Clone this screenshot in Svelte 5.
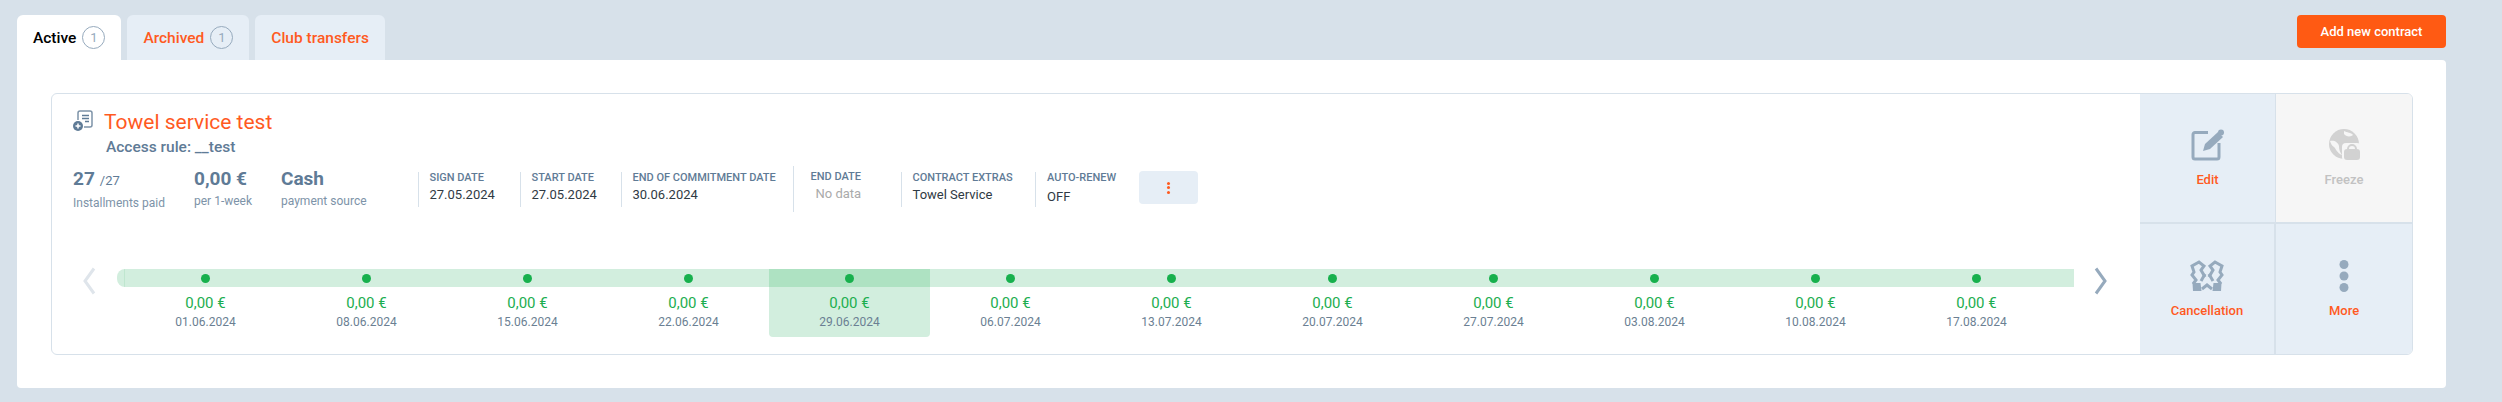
<script>
  const stats = [
    { value: '27', sub: '/27', label: 'Installments paid', width: 121 },
    { value: '0,00 €', label: 'per 1-week', width: 87 },
    { value: 'Cash', label: 'payment source', width: 136.500 }
  ];

  const fields = [
    { title: 'SIGN DATE', value: '27.05.2024', width: 102 },
    { title: 'START DATE', value: '27.05.2024', width: 101 },
    { title: 'END OF COMMITMENT DATE', value: '30.06.2024', width: 172 },
    { title: 'END DATE', value: 'No data', width: 108, empty: true },
    { title: 'CONTRACT EXTRAS', value: 'Towel Service', width: 134.500 },
    { title: 'AUTO-RENEW', value: 'OFF', width: 104, low: true }
  ];

  const dates = [
    '01.06.2024', '08.06.2024', '15.06.2024', '22.06.2024', '29.06.2024', '06.07.2024',
    '13.07.2024', '20.07.2024', '27.07.2024', '03.08.2024', '10.08.2024', '17.08.2024'
  ];
  const current = 4;
</script>

<div class="page">
  <div class="top">
    <div class="tabs">
      <div class="tab active">Active <span class="count">1</span></div>
      <div class="tab">Archived <span class="count">1</span></div>
      <div class="tab">Club transfers</div>
    </div>
    <button class="add">Add new contract</button>
  </div>

  <div class="panel">
    <div class="card">
      <div class="info">
        <div class="heading">
          <svg class="doc" width="20" height="21" viewBox="0 0 20 21">
            <path d="M5 10V3a2 2 0 0 1 2-2h10a2 2 0 0 1 2 2v12a2 2 0 0 1-2 2h-6" fill="none" stroke="#7d93a8" stroke-width="1.500"/>
            <path d="M9 5.500h7M9 8.500h7M12 11.500h4" stroke="#5f7b96" stroke-width="1.500"/>
            <circle cx="5" cy="16" r="5" fill="#5f7b96"/>
            <path d="M5 13.500v5M2.500 16h5" stroke="#fff" stroke-width="1.500"/>
          </svg>
          <h2>Towel service test</h2>
        </div>
        <p class="rule">Access rule: __test</p>

        <div class="details">
          {#each stats as s}
            <div class="stat" style="width: {s.width}px">
              <div class="value">{s.value}{#if s.sub}<small>{s.sub}</small>{/if}</div>
              <div class="label">{s.label}</div>
            </div>
          {/each}
          {#each fields as f}
            <div class="field" class:tall={f.empty} style="width: {f.width}px">
              <div class="title">{f.title}</div>
              <div class="text" class:empty={f.empty} class:low={f.low}>{f.value}</div>
            </div>
          {/each}
          <button class="menu" aria-label="Options"><i></i><i></i><i></i></button>
        </div>

        <div class="timeline">
          <svg class="arrow" width="14" height="28" viewBox="0 0 14 28">
            <path d="M12 1.500 3 14l9 12.500" fill="none" stroke="#dfe5eb" stroke-width="3"/>
          </svg>
          <div class="track">
            <div class="cap"></div>
            {#each dates as d, i}
              <div class="item" class:current={i === current}>
                <div class="band"><span class="dot"></span></div>
                <div class="amount">0,00 €</div>
                <div class="date">{d}</div>
              </div>
            {/each}
            <div class="tail"></div>
          </div>
          <svg class="arrow" width="14" height="28" viewBox="0 0 14 28">
            <path d="M2 1.500 11 14l-9 12.500" fill="none" stroke="#96aabd" stroke-width="3"/>
          </svg>
        </div>
      </div>

      <div class="actions">
        <button class="action">
          <svg width="34" height="32" viewBox="0 0 34 32">
            <path d="M17 3.500H4a2 2 0 0 0-2 2V28a2 2 0 0 0 2 2h22a2 2 0 0 0 2-2V14" fill="none" stroke="#96aabd" stroke-width="3"/>
            <path d="M12 22l2-7L27 3l5 5-13 12z" fill="#96aabd"/>
            <circle cx="30" cy="3.500" r="3" fill="#96aabd"/>
          </svg>
          <span>Edit</span>
        </button>
        <button class="action off">
          <svg width="34" height="32" viewBox="0 0 34 32">
            <circle cx="17" cy="15" r="15" fill="#d2d2d2"/>
            <path d="M17 2c3 2 7 1 9 4-2 2-7 2-9-1zM3 12c4-1 8 1 9 5 0 4 1 6 3 9-5-2-6-6-8-8-2-1-3-3-4-6z" fill="#f6f6f6"/>
            <rect x="15" y="14" width="19" height="18" rx="4" fill="#f6f6f6"/>
            <rect x="17" y="20" width="16" height="11" rx="3" fill="#d2d2d2"/>
            <path d="M21 21v-1a4 4 0 0 1 8 0v1" fill="none" stroke="#d2d2d2" stroke-width="2"/>
          </svg>
          <span>Freeze</span>
        </button>
        <button class="action">
          <svg width="36" height="32" viewBox="0 0 36 32">
            <g fill="none" stroke="#96aabd" stroke-width="3">
              <path d="M16 17 12 10l3-4-5-4-7 4 2 6-2 3 4 5-3 4"/>
              <path d="M16 14l-4 7"/>
              <path d="M20 17l4-7-3-4 5-4 7 4-2 6 2 3-4 5 3 4"/>
              <path d="M20 14l4 7"/>
              <path d="M13 29l5-4 5 4"/>
            </g>
            <path d="M3.500 23h8l1 8H4zM32.500 23h-8l-1 8H32z" fill="#96aabd"/>
          </svg>
          <span>Cancellation</span>
        </button>
        <button class="action">
          <svg width="34" height="32" viewBox="0 0 34 32">
            <circle cx="17" cy="4.500" r="4.500" fill="#96aabd"/>
            <circle cx="17" cy="16" r="4.500" fill="#96aabd"/>
            <circle cx="17" cy="27.500" r="4.500" fill="#96aabd"/>
          </svg>
          <span>More</span>
        </button>
      </div>
    </div>
  </div>
</div>

<style>
  :global(body) {
    margin: 0;
    background: #d7e1ea;
  }

  .page {
    height: 402px;
    box-sizing: border-box;
    padding: 15px 56px 0 17px;
    font-family: Roboto, "Liberation Sans", sans-serif;
    color: #5f7b96;
  }

  .top {
    display: flex;
    justify-content: space-between;
    height: 45px;
  }

  .tabs {
    display: flex;
    gap: 6px;
  }

  .tab {
    display: flex;
    align-items: center;
    gap: 6px;
    height: 45px;
    padding: 0 16px;
    box-sizing: border-box;
    background: #e6eef6;
    border-radius: 6px 6px 0 0;
    color: #ff5a1f;
    font-size: 15.500px;
    font-weight: 500;
  }

  .tab.active {
    background: #fff;
    color: #000;
  }

  .count {
    width: 21px;
    height: 21px;
    border: 1px solid #96aabd;
    border-radius: 50%;
    display: flex;
    align-items: center;
    justify-content: center;
    color: #96aabd;
    font-size: 13px;
    font-weight: 400;
  }

  .add {
    width: 149px;
    height: 33px;
    padding: 0;
    border: 0;
    border-radius: 4px;
    background: #ff5a13;
    color: #fff;
    font: 500 13px Roboto, sans-serif;
  }

  .panel {
    height: 328px;
    box-sizing: border-box;
    padding: 33px 33px 33px 34px;
    background: #fff;
    border-radius: 0 4px 4px 4px;
  }

  .card {
    display: flex;
    height: 262px;
    box-sizing: border-box;
    border: 1px solid #d7e1ea;
    border-radius: 6px;
    overflow: hidden;
  }

  .info {
    flex: 1;
    min-width: 0;
    padding: 16px 0 0 21px;
  }

  .heading {
    display: flex;
    align-items: center;
    gap: 11px;
    height: 24px;
  }

  .doc {
    flex: none;
    margin-top: -3px;
  }

  h2 {
    margin: 0;
    color: #ff5a1f;
    font-size: 21px;
    font-weight: 400;
    line-height: 24px;
  }

  .rule {
    margin: 3px 0 0 33px;
    font-size: 15.500px;
    font-weight: 500;
    line-height: 20px;
  }

  .details {
    display: flex;
    align-items: center;
    height: 46px;
    margin-top: 9px;
  }

  .stat {
    flex: none;
    align-self: flex-start;
    padding-top: 1px;
  }

  .value {
    font-size: 19px;
    font-weight: 700;
    line-height: 24px;
  }

  .value small {
    margin-left: 5px;
    font-size: 13px;
    font-weight: 400;
  }

  .label {
    margin-top: 2px;
    font-size: 12px;
    line-height: 16px;
    color: #7d93a8;
  }

  .field {
    flex: none;
    height: 35px;
    box-sizing: border-box;
    border-left: 1px solid #d7e1ea;
    padding-left: 11px;
  }

  .field.tall {
    height: 46px;
    padding: 5px 0 0 17px;
  }

  .title {
    font-size: 11px;
    font-weight: 500;
    line-height: 12px;
    white-space: nowrap;
  }

  .text {
    margin-top: 3px;
    color: #2f3a44;
    font-size: 13px;
    font-weight: 400;
    line-height: 16px;
    white-space: nowrap;
  }

  .text.empty {
    padding-left: 5px;
    color: #aaa;
  }

  .text.low {
    margin-top: 5px;
  }

  .menu {
    flex: none;
    align-self: flex-start;
    display: flex;
    flex-direction: column;
    align-items: center;
    justify-content: center;
    gap: 1.500px;
    width: 59px;
    height: 33px;
    margin-top: 5px;
    padding: 0;
    border: 0;
    border-radius: 4px;
    background: #e6eef6;
  }

  .menu i {
    width: 3px;
    height: 3px;
    border-radius: 50%;
    background: #ff5a1f;
  }

  .timeline {
    display: flex;
    align-items: flex-start;
    margin-top: 57px;
    margin-left: 9px;
  }

  .arrow {
    flex: none;
  }

  .arrow:first-child {
    margin: -2px 21px 0 0;
  }

  .arrow:last-child {
    margin: -2px 0 0 20px;
  }

  .track {
    display: flex;
    width: 1957px;
    flex: none;
  }

  .cap {
    flex: none;
    width: 8px;
    height: 18px;
    box-sizing: border-box;
    border-right: 1px solid #bfe6cf;
    border-radius: 9px 0 0 9px;
    background: #d2eede;
  }

  .tail {
    flex: 1;
    height: 18px;
    background: #d2eede;
  }

  .item {
    flex: none;
    width: 161px;
    height: 68px;
    text-align: center;
    border-radius: 0 0 4px 4px;
  }

  .item.current {
    background: #d2eede;
  }

  .band {
    display: flex;
    align-items: center;
    justify-content: center;
    height: 18px;
    background: #d2eede;
  }

  .current .band {
    background: #aee2c2;
  }

  .dot {
    width: 9px;
    height: 9px;
    border-radius: 50%;
    background: #17b04d;
  }

  .amount {
    margin-top: 6px;
    color: #1cae50;
    font-size: 15px;
    line-height: 20px;
  }

  .date {
    color: #6b7f93;
    font-size: 12px;
    line-height: 18px;
  }

  .actions {
    flex: none;
    display: grid;
    grid-template-columns: 136px 136px;
    grid-template-rows: 130px 130px;
    width: 272px;
  }

  .action {
    display: flex;
    flex-direction: column;
    align-items: center;
    justify-content: center;
    gap: 11px;
    padding: 0;
    background: #e6eef6;
    border: 0;
    border-right: 1px solid #d7e1ea;
    border-bottom: 2px solid #d7e1ea;
    color: #ff5a1f;
    font: 500 13px/15px Roboto, sans-serif;
  }

  .action:nth-child(2n) {
    border-right: 0;
  }

  .action:nth-child(n + 3) {
    border-bottom: 0;
  }

  .action:nth-child(3) {
    border-right-width: 2px;
  }

  .action.off {
    background: #f6f6f6;
    color: #c2c2c2;
  }
</style>
